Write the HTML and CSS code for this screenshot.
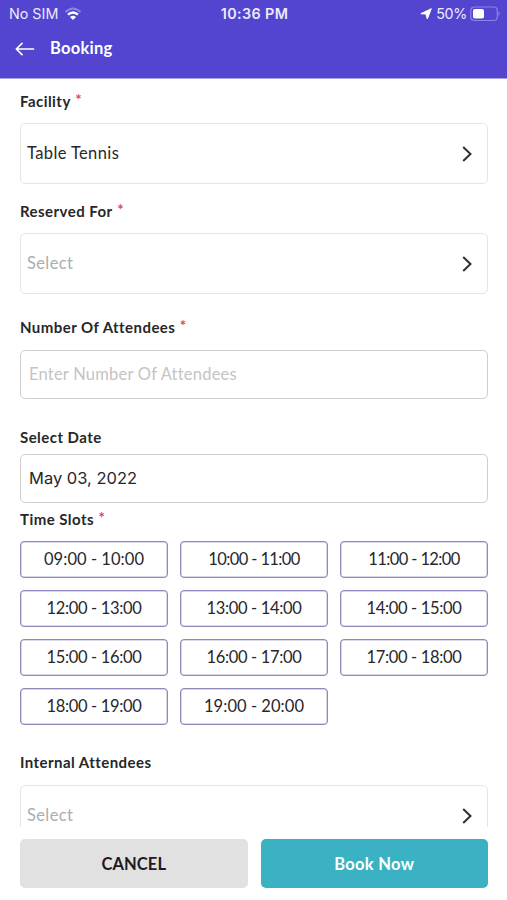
FILE: index.html
```html
<!DOCTYPE html>
<html lang="en">
<head>
<meta charset="utf-8">
<title>Booking</title>
<link rel="stylesheet" href="styles.css">
</head>
<body>
<div class="app">
  <header class="header">
    <div class="status">
      <div class="carrier"><span>No SIM</span>
        <svg width="18" height="14" viewBox="0 0 18 14" fill="none" stroke="#fff"><path d="M1.500 5Q9-2 16.500 5" stroke-width="2" opacity=".35"/><path d="M4 7.600Q9 3.200 14 7.600" stroke-width="2.400"/><path d="M6 9.900Q9 7.500 12 9.900L9 12.900Z" fill="#fff" stroke="none"/></svg>
      </div>
      <div class="clock">10:36 PM</div>
      <div class="power">
        <svg width="12" height="12" viewBox="0 0 12 12"><path d="M11.300.7 7.300 11 6 6 .8 5.700Z" fill="#fff" stroke="#fff" stroke-width="1" stroke-linejoin="round"/></svg>
        <span>50%</span>
        <svg class="battery" width="31" height="16" viewBox="0 0 31 16"><rect x=".8" y="1" width="26.500" height="13.500" rx="3.500" fill="none" stroke="#8d83e2" stroke-width="1.200"/><rect x="3" y="3" width="11" height="9.500" rx="1.800" fill="#fff"/><path d="M28.500 5.500q2.500 2.200 0 4.500Z" fill="#8d83e2"/></svg>
      </div>
    </div>
    <div class="nav">
      <svg width="20" height="14" viewBox="0 0 20 14" fill="none" stroke="#fff" stroke-width="1.700" stroke-linecap="round" stroke-linejoin="round"><path d="M18.500 7H1.500M7 1.300 1.300 7 7 12.700"/></svg>
      <h1>Booking</h1>
    </div>
  </header>
  <main class="form">
    <label class="label facility">Facility<i>*</i></label>
    <div class="picker"><span>Table Tennis</span><svg class="chevron" viewBox="0 0 10 16"><path d="M1.200 1 8.500 8 1.200 15"/></svg></div>
    <label class="label reserved">Reserved For<i>*</i></label>
    <div class="picker empty"><span>Select</span><svg class="chevron" viewBox="0 0 10 16"><path d="M1.200 1 8.500 8 1.200 15"/></svg></div>
    <label class="label attendees">Number Of Attendees<i>*</i></label>
    <div class="field hint">Enter Number Of Attendees</div>
    <label class="label date-label">Select Date</label>
    <div class="field date">May 03, 2022</div>
    <label class="label slots-label">Time Slots<i>*</i></label>
    <div class="slots">
      <div class="slot wide">09:00 - 10:00</div><div class="slot narrow">10:00 - 11:00</div><div class="slot narrow">11:00 - 12:00</div>
      <div class="slot">12:00 - 13:00</div><div class="slot">13:00 - 14:00</div><div class="slot">14:00 - 15:00</div>
      <div class="slot">15:00 - 16:00</div><div class="slot">16:00 - 17:00</div><div class="slot">17:00 - 18:00</div>
      <div class="slot">18:00 - 19:00</div><div class="slot wide">19:00 - 20:00</div>
    </div>
    <label class="label internal">Internal Attendees</label>
    <div class="picker empty"><span>Select</span><svg class="chevron" viewBox="0 0 10 16"><path d="M1.200 1 8.500 8 1.200 15"/></svg></div>
  </main>
  <footer class="actions"><div class="button cancel">CANCEL</div><div class="button book">Book Now</div></footer>
</div>
</body>
</html>
```
FILE: styles.css
```css
* { box-sizing: border-box; }
body { margin: 0; background: #fff; font-family: Lato, "Open Sans", sans-serif; font-variant-ligatures: none; color: #27272a; }
.app { height: 900px; display: flex; flex-direction: column; overflow: hidden; }
.header { height: 79px; flex: none; background: #5345cf; border-bottom: 1px solid #a9a1e8; color: #fff; }
.status { height: 28px; display: grid; grid-template-columns: 1fr auto 1fr; align-items: center; padding: 0 6px 0 9px; font: 14.3px/28px Inter, sans-serif; color: #eceaff; }
.carrier, .power { display: flex; align-items: center; }
.carrier { gap: 6px; }
.clock { font-weight: 600; letter-spacing: .4px; font-size: 14.3px; margin-left: -1px; }
.power { justify-content: flex-end; gap: 4px; }
.power span { letter-spacing: -.3px; }
.battery { margin-left: -1px; }
.nav { height: 41px; display: flex; align-items: center; gap: 15px; padding-left: 15px; }
.nav h1 { margin: 0; font-size: 16.5px; font-weight: 700; letter-spacing: .25px; line-height: 20px; padding-bottom: 1px; }
.form { flex: 1; min-height: 0; overflow: hidden; padding: 0 19px 0 20px; }
.label { display: block; height: 20px; line-height: 18px; font-size: 15px; font-weight: 700; letter-spacing: .45px; white-space: nowrap; }
.label i { margin-left: 4.5px; font-style: normal; color: #d94560; font-size: 15px; position: relative; top: -2px; }
.facility { margin: 13px 0 11px; }
.reserved { margin: 18px 0 11px; }
.attendees { margin: 24px 0 12px; }
.date-label { margin: 29px 0 6px; }
.slots-label { margin: 7px 0 11px; }
.internal { margin: 28px 0 12px; }
.picker { height: 61px; border: 1px solid #e5e5e5; border-radius: 5px; padding: 0 15px 0 6px; display: flex; align-items: center; justify-content: space-between; font-size: 16.5px; letter-spacing: .38px; }
.picker span { padding-bottom: 1px; }
.empty span { color: #adadad; }
.chevron { width: 10px; height: 16px; fill: none; stroke: #303034; stroke-width: 2; }
.field { height: 49px; border: 1px solid #cecece; border-radius: 5px; padding: 0 8px; line-height: 46px; font-size: 16.5px; }
.hint { color: #c4c4c4; letter-spacing: .22px; }
.date { font-family: Inter, sans-serif; }
.slots { display: grid; grid-template-columns: repeat(3, 1fr); grid-auto-rows: 37px; gap: 12px; }
.slot { display: flex; align-items: center; justify-content: center; border: 1px solid #8f87b9; box-shadow: inset 0 0 0 .5px #b5afd2; border-radius: 4px; padding-bottom: 2px; font-size: 16.5px; letter-spacing: -.35px; white-space: nowrap; }
.slot.wide { letter-spacing: .05px; }
.slot.narrow { letter-spacing: -.6px; }
.actions { flex: none; height: 73px; padding: 12px 19px 12px 20px; display: grid; grid-template-columns: 1fr 1fr; gap: 13px; }
.button { display: flex; align-items: center; justify-content: center; border-radius: 5px; font-size: 16.5px; font-weight: 700; }
.cancel { background: #e1e1e1; color: #1c1c1e; letter-spacing: .1px; }
.book { background: #3ab2c3; color: #fff; letter-spacing: .3px; }
```
